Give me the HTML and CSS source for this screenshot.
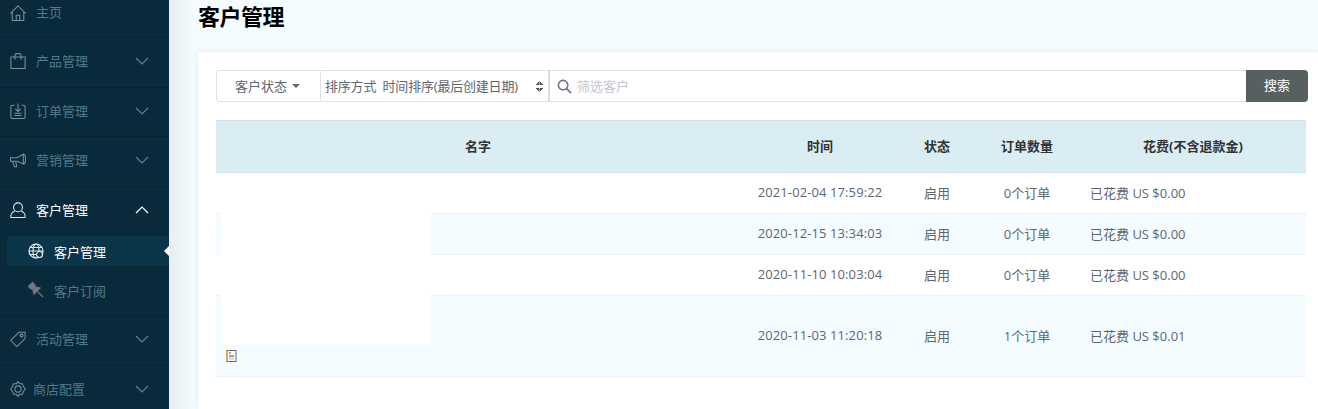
FILE: index.html
```html
<!DOCTYPE html>
<html lang="zh-CN">
<head>
  <meta charset="UTF-8" />
  <title>客户管理</title>
  <link rel="stylesheet" href="styles.css">
</head>
<body>
  <aside class="sidebar">
    <div class="nav-item first">
      <svg class="nav-icon" viewBox="0 0 18 18"><path d="M.5 9.500 9 1 17.500 9.500M2.500 7.500V17.500H15.500V7.500M7 17.500V11.500H11V17.500"/></svg>
      <span class="nav-text">主页</span>
    </div>
    <div class="nav-item">
      <svg class="nav-icon" viewBox="0 0 18 18"><path d="M1 4.500H17V17.500H1ZM5.500 7.500V3Q5.500 .5 9 .5T12.500 3V7.500"/></svg>
      <span class="nav-text">产品管理</span>
      <svg class="chevron" viewBox="0 0 14 8"><path d="M1 1 7 7 13 1"/></svg>
    </div>
    <div class="nav-item">
      <svg class="nav-icon" viewBox="0 0 18 18"><path d="M5 2.500H3Q1 2.500 1 4.500V15.500Q1 17.500 3 17.500H15Q17 17.500 17 15.500V4.500Q17 2.500 15 2.500H13M9 .5V9M6 6.500 9 9.500 12 6.500M5 11.500H13M5 14H13"/></svg>
      <span class="nav-text">订单管理</span>
      <svg class="chevron" viewBox="0 0 14 8"><path d="M1 1 7 7 13 1"/></svg>
    </div>
    <div class="nav-item">
      <svg class="nav-icon" viewBox="0 0 18 18"><path d="M.5 6.500H8L15 2.500V13.500L8 10.500H.5ZM15 2.500Q17.500 2.500 17.500 8T15 13.500M3 10.500 5 16.500H7.500L6.500 10.500"/></svg>
      <span class="nav-text">营销管理</span>
      <svg class="chevron" viewBox="0 0 14 8"><path d="M1 1 7 7 13 1"/></svg>
    </div>
    <div class="nav-item open">
      <svg class="nav-icon" viewBox="0 0 18 18"><circle cx="9" cy="6" r="5"/><path d="M.8 17.500Q.8 11.500 5.500 10.500M17.200 17.500Q17.200 11.500 12.500 10.500M.8 17.500H17.200"/></svg>
      <span class="nav-text">客户管理</span>
      <svg class="chevron" viewBox="0 0 14 8"><path d="M1 7 7 1 13 7"/></svg>
    </div>
    <div class="sub-menu">
      <div class="sub-item active">
        <svg class="sub-icon" viewBox="0 0 16 16"><circle cx="8" cy="8" r="7"/><ellipse cx="8" cy="8" rx="3" ry="7"/><path d="M1 8H15M2 4.500H14M2 11.500H14"/><circle class="globe-gear" cx="11.500" cy="11.500" r="3"/></svg>
        <span>客户管理</span>
      </div>
      <div class="sub-item">
        <svg class="sub-icon pin" viewBox="0 0 16 16"><path d="M.5 4.500 4.500 .5 7 3 6 4.500 12 6 6 12 4.500 6 3 7ZM9 9 15 15"/></svg>
        <span>客户订阅</span>
      </div>
    </div>
    <div class="nav-item">
      <svg class="nav-icon" viewBox="0 0 18 18"><path d="M.8 10.500 10 1.500H17V8.500L7.500 17.500ZM13 3.500A1.500 1.500 0 1 0 13.010 3.500"/></svg>
      <span class="nav-text">活动管理</span>
      <svg class="chevron" viewBox="0 0 14 8"><path d="M1 1 7 7 13 1"/></svg>
    </div>
    <div class="nav-item last">
      <svg class="nav-icon" viewBox="0 0 18 18"><path d="M9 .8 11 3 14 3 15 6 17.200 9 15 12 14 15 11 15 9 17.200 7 15 4 15 3 12 .8 9 3 6 4 3 7 3Z"/><circle cx="9" cy="9" r="3.500"/></svg>
      <span class="nav-text">商店配置</span>
      <svg class="chevron" viewBox="0 0 14 8"><path d="M1 1 7 7 13 1"/></svg>
    </div>
  </aside>

  <main class="main">
    <h1 class="page-title">客户管理</h1>
    <section class="card">
      <div class="filter-bar">
        <div class="filter-status">客户状态<span class="caret"></span></div>
        <div class="filter-sort">
          <span class="sort-label">排序方式&nbsp; 时间排序(最后创建日期)</span>
          <span class="sort-arrows"></span>
        </div>
        <div class="filter-search">
          <svg class="search-icon" viewBox="0 0 16 16"><circle cx="6.500" cy="6.500" r="5"/><path d="M10 10 15 15"/></svg>
          <span class="placeholder">筛选客户</span>
        </div>
        <div class="search-btn">搜索</div>
      </div>

      <div class="table-wrap">
        <table class="customers">
          <thead>
            <tr>
              <th class="col-name">名字</th>
              <th class="col-time">时间</th>
              <th class="col-status">状态</th>
              <th class="col-orders">订单数量</th>
              <th class="col-cost">花费(不含退款金)</th>
            </tr>
          </thead>
          <tbody>
            <tr>
              <td></td>
              <td class="time">2021-02-04 17:59:22</td>
              <td>启用</td>
              <td>0个订单</td>
              <td class="cost">已花费 US $0.00</td>
            </tr>
            <tr class="alt">
              <td></td>
              <td class="time">2020-12-15 13:34:03</td>
              <td>启用</td>
              <td>0个订单</td>
              <td class="cost">已花费 US $0.00</td>
            </tr>
            <tr>
              <td></td>
              <td class="time">2020-11-10 10:03:04</td>
              <td>启用</td>
              <td>0个订单</td>
              <td class="cost">已花费 US $0.00</td>
            </tr>
            <tr class="alt tall">
              <td class="note-cell">
                <svg class="note-icon" viewBox="0 0 11 12"><rect x="1" y=".5" width="9" height="11" fill="#fff" stroke="#667"/><path d="M.5 0V12" stroke="#e8a64c"/><path d="M3 3H5M3 6H8" stroke="#445"/><path d="M3 8.500H8" stroke="#ccc" stroke-width="2"/></svg>
              </td>
              <td class="time">2020-11-03 11:20:18</td>
              <td>启用</td>
              <td>1个订单</td>
              <td class="cost">已花费 US $0.01</td>
            </tr>
          </tbody>
        </table>
        <div class="redacted"></div>
      </div>
    </section>
  </main>
</body>
</html>
```

FILE: styles.css
```css
* {
  box-sizing: border-box;
}
html, body {
  height: 100%;
}
body {
  margin: 0;
  display: flex;
  overflow: hidden;
  background: #f4fcff;
  color: #5f6670;
  font-family: "Open Sans", "Noto Sans CJK SC", sans-serif;
  font-size: 13px;
}

/* sidebar */
.sidebar {
  width: 169px;
  flex: none;
  background: #082a3a;
  color: #4f7b8b;
}
.nav-item {
  display: flex;
  align-items: center;
  height: 49.5px;
  padding: 0 0 2px 10px;
  border-bottom: 1px solid #05222f;
}
.nav-item.first {
  height: 38px;
  padding-bottom: 16px;
  align-items: flex-end;
}
.nav-item.open {
  border-bottom: none;
  color: #fff;
}
.nav-item.last {
  border-bottom: none;
}
.nav-icon {
  width: 16px;
  height: 16px;
  flex: none;
  fill: none;
  stroke: #7d8f98;
  stroke-width: 1.2;
}
.open .nav-icon {
  stroke: #dfe6ea;
}
.nav-text {
  margin-left: 10px;
  width: 99px;
  line-height: 18px;
}
.last .nav-text {
  margin-left: 7px;
  width: 102px;
}
.chevron {
  width: 14px;
  height: 8px;
  fill: none;
  stroke: #64808c;
  stroke-width: 1.2;
}
.open .chevron {
  stroke: #fff;
}
.sub-menu {
  height: 80px;
  border-bottom: 1px solid #05222f;
}
.sub-item {
  position: relative;
  display: flex;
  align-items: center;
  height: 30px;
  margin-left: 7px;
  padding-left: 21px;
  border-radius: 4px 0 0 4px;
  color: #4f7b8b;
}
.sub-item + .sub-item {
  margin-top: 9px;
}
.sub-item span {
  margin-left: 10px;
}
.sub-item.active {
  background: #0b3549;
  color: #fff;
}
.sub-item.active::after {
  content: "";
  position: absolute;
  right: 0;
  top: 10px;
  border: 5px solid transparent;
  border-left: none;
  border-right-color: #fff;
}
.sub-icon {
  width: 16px;
  height: 16px;
  flex: none;
  fill: none;
  stroke: #e4ebef;
  stroke-width: 1.2;
}
.globe-gear {
  fill: #0b3549;
}
.sub-icon.pin {
  fill: #6e7a82;
  stroke: #6e7a82;
}

/* main */
.main {
  flex: 1;
  min-width: 0;
  background: linear-gradient(90deg, #e7eef1, #f4fcff 26px);
}
.page-title {
  margin: 0;
  height: 52px;
  padding: 1px 0 0 29px;
  color: #000;
  font-size: 22px;
  font-weight: 700;
  line-height: 30px;
  letter-spacing: -.5px;
}
.card {
  height: 357px;
  margin-left: 29px;
  padding: 18px 12px 0 18px;
  background: #fff;
  border-radius: 3px 0 0 0;
  box-shadow: 0 0 6px rgba(0, 0, 0, .08);
}

/* filter bar */
.filter-bar {
  display: flex;
  height: 32px;
  margin-right: -2px;
  line-height: 30px;
}
.filter-status {
  width: 105px;
  flex: none;
  display: flex;
  align-items: center;
  justify-content: center;
  padding-right: 2px;
  border: 1px solid #e0e0e8;
  border-radius: 3px 0 0 3px;
}
.caret {
  margin-left: 5px;
  border: 4px solid transparent;
  border-bottom: none;
  border-top: 4px solid #666;
}
.filter-sort {
  width: 228px;
  flex: none;
  display: flex;
  align-items: center;
  justify-content: space-between;
  padding: 0 5px 0 4px;
  border: 1px solid #e0e0e8;
  border-left: none;
}
.sort-label {
  letter-spacing: -.2px;
}
.sort-arrows {
  width: 7px;
  height: 11px;
  background:
    linear-gradient(to top left, #555 50%, transparent 50%) left top / 50% 4px no-repeat,
    linear-gradient(to top right, #555 50%, transparent 50%) right top / 50% 4px no-repeat,
    linear-gradient(to bottom left, #555 50%, transparent 50%) left bottom / 50% 4px no-repeat,
    linear-gradient(to bottom right, #555 50%, transparent 50%) right bottom / 50% 4px no-repeat;
}
.filter-search {
  flex: 1;
  display: flex;
  align-items: center;
  padding-left: 7px;
  border: 1px solid #e0e0e8;
  border-left: 1px solid #d8d8e2;
  border-right: none;
}
.search-icon {
  width: 15px;
  height: 15px;
  fill: none;
  stroke: #6b7480;
  stroke-width: 1.7;
}
.placeholder {
  margin-left: 5px;
  color: #c2c6cf;
}
.search-btn {
  width: 62px;
  flex: none;
  background: #585f61;
  color: #fff;
  text-align: center;
  border-radius: 0 4px 4px 0;
}

/* table */
.table-wrap {
  position: relative;
  margin-top: 18px;
}
.customers {
  width: 100%;
  table-layout: fixed;
  border-collapse: collapse;
}
.customers th {
  height: 52px;
  padding: 0 0 3px;
  background: #daedf3;
  border-top: 1px solid #cfe2e9;
  border-bottom: 1px solid #cfe2e9;
  color: #333;
  font-size: 13px;
  font-weight: 700;
  text-align: center;
}
.col-name { width: 524px; }
.col-time { width: 160px; }
.col-status { width: 74px; }
.col-orders { width: 106px; }
.customers td {
  height: 41px;
  padding: 0 0 2px;
  border-bottom: 1px solid #edf2f7;
  text-align: center;
}
.customers td.time {
  letter-spacing: .1px;
}
.customers td.cost {
  padding-left: 10px;
  text-align: left;
}
.alt td {
  background: #f4fcff;
}
.tall td {
  height: 81px;
}
.customers .note-cell {
  padding: 54px 0 0 10px;
  text-align: left;
  vertical-align: top;
}
.note-icon {
  display: block;
  width: 11px;
  height: 12px;
}
.redacted {
  position: absolute;
  left: 5px;
  top: 53px;
  width: 210px;
  height: 172px;
  background: #fff;
}
```
